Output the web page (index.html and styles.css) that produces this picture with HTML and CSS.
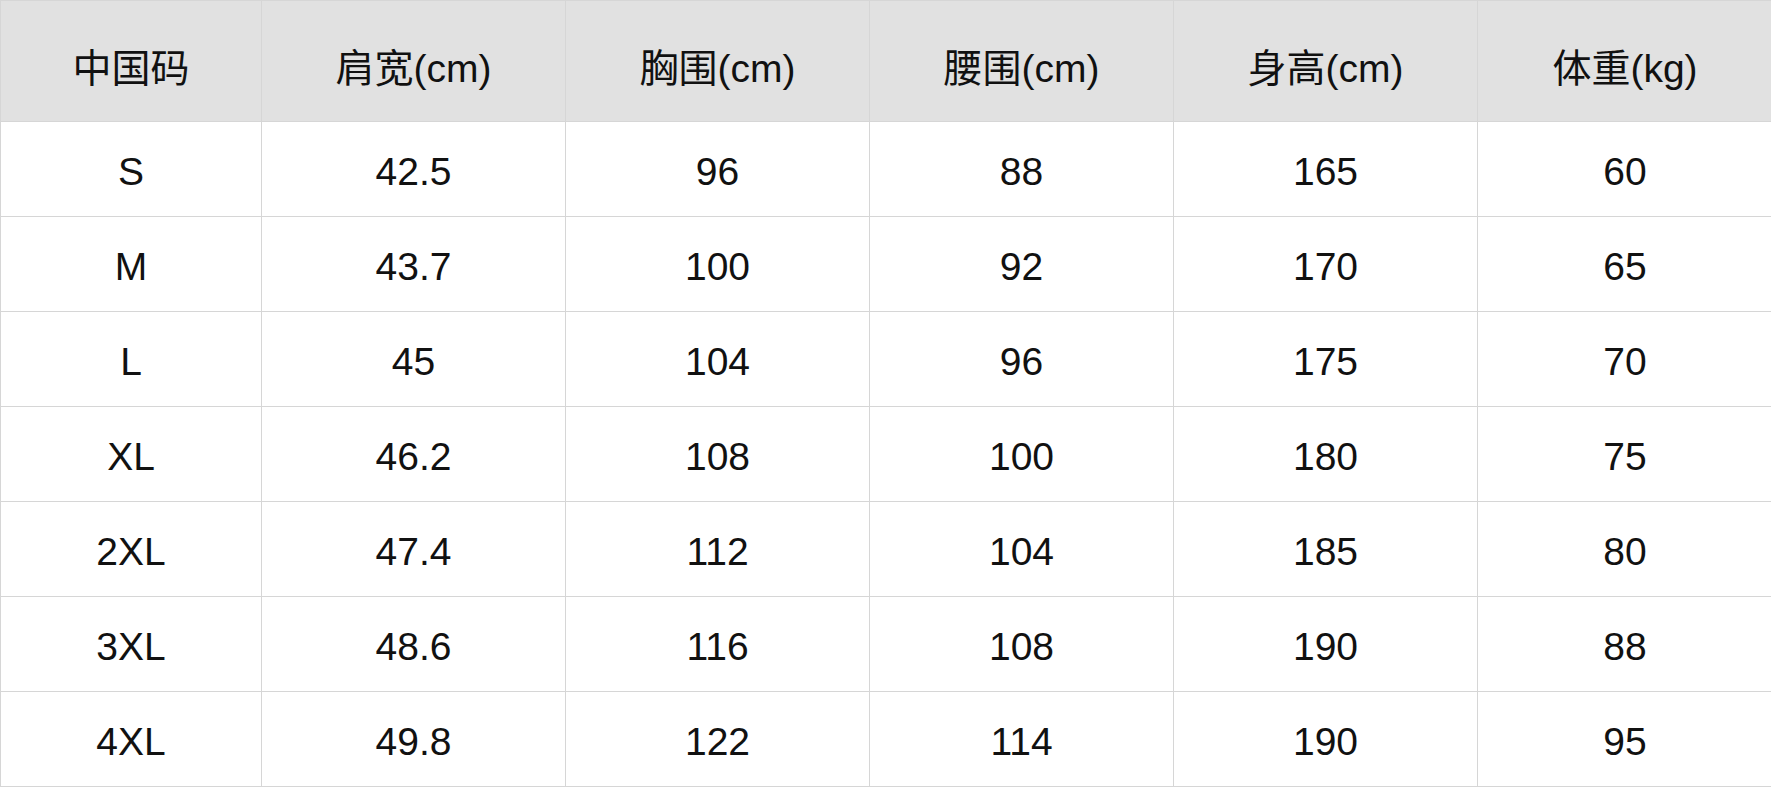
FILE: index.html
```html
<!DOCTYPE html>
<html lang="zh-CN">
<head>
<meta charset="utf-8">
<title>尺码表</title>
<link rel="stylesheet" href="styles.css">
</head>
<body>
<table class="size-table">
  <colgroup>
    <col class="c1"><col class="c2"><col class="c2"><col class="c2"><col class="c2"><col class="c6">
  </colgroup>
  <thead>
    <tr>
      <th>中国码</th><th>肩宽(cm)</th><th>胸围(cm)</th><th>腰围(cm)</th><th>身高(cm)</th><th>体重(kg)</th>
    </tr>
  </thead>
  <tbody>
    <tr><td>S</td><td>42.5</td><td>96</td><td>88</td><td>165</td><td>60</td></tr>
    <tr><td>M</td><td>43.7</td><td>100</td><td>92</td><td>170</td><td>65</td></tr>
    <tr><td>L</td><td>45</td><td>104</td><td>96</td><td>175</td><td>70</td></tr>
    <tr><td>XL</td><td>46.2</td><td>108</td><td>100</td><td>180</td><td>75</td></tr>
    <tr><td>2XL</td><td>47.4</td><td>112</td><td>104</td><td>185</td><td>80</td></tr>
    <tr><td>3XL</td><td>48.6</td><td>116</td><td>108</td><td>190</td><td>88</td></tr>
    <tr><td>4XL</td><td>49.8</td><td>122</td><td>114</td><td>190</td><td>95</td></tr>
  </tbody>
</table>
</body>
</html>
```
FILE: styles.css
```css
html, body {
  margin: 0;
  padding: 0;
  background: #ffffff;
}
body {
  font-family: "Liberation Sans", "Noto Sans CJK SC", sans-serif;
  color: #111111;
}
.size-table {
  width: 1772px;
  border-collapse: collapse;
  table-layout: fixed;
}
.c1 { width: 261px; }
.c2 { width: 304px; }
.c6 { width: 295px; }
.size-table th,
.size-table td {
  border: 1px solid #d6d6d6;
  text-align: center;
  vertical-align: middle;
  padding: 0;
  font-size: 39px;
  font-weight: normal;
  line-height: 1;
}
.size-table th {
  background: #e1e1e1;
  height: 121px;
  padding-top: 14px;
  box-sizing: border-box;
}
.size-table td {
  height: 95px;
  padding-top: 4px;
  box-sizing: border-box;
}
```
